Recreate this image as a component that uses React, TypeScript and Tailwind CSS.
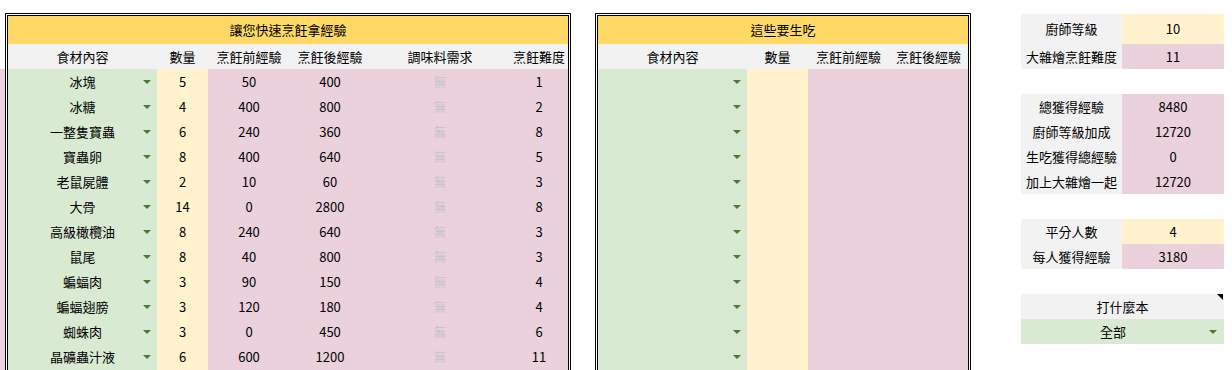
const font = "font-['Noto_Sans_CJK_TC','Noto_Sans',sans-serif]";

const cookRows: [string, number, number, number, number][] = [
    ['冰塊', 5, 50, 400, 1],
    ['冰糖', 4, 400, 800, 2],
    ['一整隻寶蟲', 6, 240, 360, 8],
    ['寶蟲卵', 8, 400, 640, 5],
    ['老鼠屍體', 2, 10, 60, 3],
    ['大骨', 14, 0, 2800, 8],
    ['高級橄欖油', 8, 240, 640, 3],
    ['鼠尾', 8, 40, 800, 3],
    ['蝙蝠肉', 3, 90, 150, 4],
    ['蝙蝠翅膀', 3, 120, 180, 4],
    ['蜘蛛肉', 3, 0, 450, 6],
    ['晶礦蟲汁液', 6, 600, 1200, 11],
];

const Arrow = () => <div className="h-0 w-0 border-x-[4px] border-t-[4px] border-x-transparent border-t-[#4b7b33]" />;

const FoodCell = ({ name }: { name?: string }) => (
    <div className="grid h-[25px] grid-cols-[14px_1fr_14px] items-center bg-[#d9ead3]">
        <span />
        <span className="text-center">{name}</span>
        <Arrow />
    </div>
);

const CookTable = () => (
    <div className="w-[566px] border-[3px] border-double border-black">
        <div className="flex h-[28px] items-center justify-center bg-[#ffd966]">讓您快速烹飪拿經驗</div>
        <div className="grid h-[25px] grid-cols-[149px_51px_82px_80px_140px_58px] items-center bg-[#f2f2f2] text-center">
            <span>食材內容</span>
            <span>數量</span>
            <span>烹飪前經驗</span>
            <span>烹飪後經驗</span>
            <span>調味料需求</span>
            <span>烹飪難度</span>
        </div>
        {[...cookRows, null].map((r, i) => (
            <div key={i} className="grid grid-cols-[149px_51px_82px_80px_140px_58px] leading-[25px]">
                <FoodCell name={r?.[0]} />
                <div className="bg-[#fff2cc] text-center">{r?.[1]}</div>
                <div className="col-span-4 grid grid-cols-[82px_80px_140px_58px] bg-[#ead1dc] text-center">
                    <span>{r?.[2]}</span>
                    <span>{r?.[3]}</span>
                    <span className="text-[12px] text-[#c4c4c4]">{r ? '無' : ''}</span>
                    <span>{r?.[4]}</span>
                </div>
            </div>
        ))}
    </div>
);

const RawTable = () => (
    <div className="w-[376px] border-[3px] border-double border-black">
        <div className="flex h-[28px] items-center justify-center bg-[#ffd966]">這些要生吃</div>
        <div className="grid h-[25px] grid-cols-[149px_61px_81px_79px] items-center bg-[#f2f2f2] text-center">
            <span>食材內容</span>
            <span>數量</span>
            <span>烹飪前經驗</span>
            <span>烹飪後經驗</span>
        </div>
        {Array.from({ length: 13 }).map((_, i) => (
            <div key={i} className="grid h-[25px] grid-cols-[149px_61px_160px]">
                <FoodCell />
                <div className="bg-[#fff2cc]" />
                <div className="bg-[#ead1dc]" />
            </div>
        ))}
    </div>
);

const StatRow = ({ label, value, tone, tall }: { label: string; value: string; tone: 'y' | 'p'; tall?: boolean }) => (
    <div className={`grid grid-cols-[101px_102px] text-center ${tall ? 'h-[30px] leading-[30px]' : 'h-[25px] leading-[25px]'}`}>
        <div className="bg-[#f2f2f2] whitespace-nowrap">{label}</div>
        <div className={tone === 'y' ? 'bg-[#fff2cc]' : 'bg-[#ead1dc]'}>{value}</div>
    </div>
);

const SidePanel = () => (
    <div className="mt-px flex w-[203px] flex-col">
        <StatRow label="廚師等級" value="10" tone="y" tall />
        <StatRow label="大雜燴烹飪難度" value="11" tone="p" />
        <div className="h-[25px]" />
        <StatRow label="總獲得經驗" value="8480" tone="p" />
        <StatRow label="廚師等級加成" value="12720" tone="p" />
        <StatRow label="生吃獲得總經驗" value="0" tone="p" />
        <StatRow label="加上大雜燴一起" value="12720" tone="p" />
        <div className="h-[25px]" />
        <StatRow label="平分人數" value="4" tone="y" />
        <StatRow label="每人獲得經驗" value="3180" tone="p" />
        <div className="h-[25px]" />
        <div className="relative h-[25px] bg-[#f2f2f2] text-center leading-[25px]">
            打什麼本
            <div className="absolute top-0 right-px h-0 w-0 border-t-[6px] border-l-[6px] border-t-black border-l-transparent" />
        </div>
        <div className="flex h-[25px] items-center bg-[#d9ead3]">
            <span className="flex-1 text-center">全部</span>
            <div className="mr-[7px] ml-[4px]">
                <Arrow />
            </div>
        </div>
    </div>
);

export default function App() {
    return (
        <div className={`flex h-[370px] items-start overflow-hidden bg-white pt-[13px] text-[13px] text-black ${font}`}>
            <div className="mt-[56px] h-[400px] w-[5px] bg-[#ead1dc]" />
            <CookTable />
            <div className="ml-[24px]">
                <RawTable />
            </div>
            <div className="ml-[50px]">
                <SidePanel />
            </div>
        </div>
    );
}
